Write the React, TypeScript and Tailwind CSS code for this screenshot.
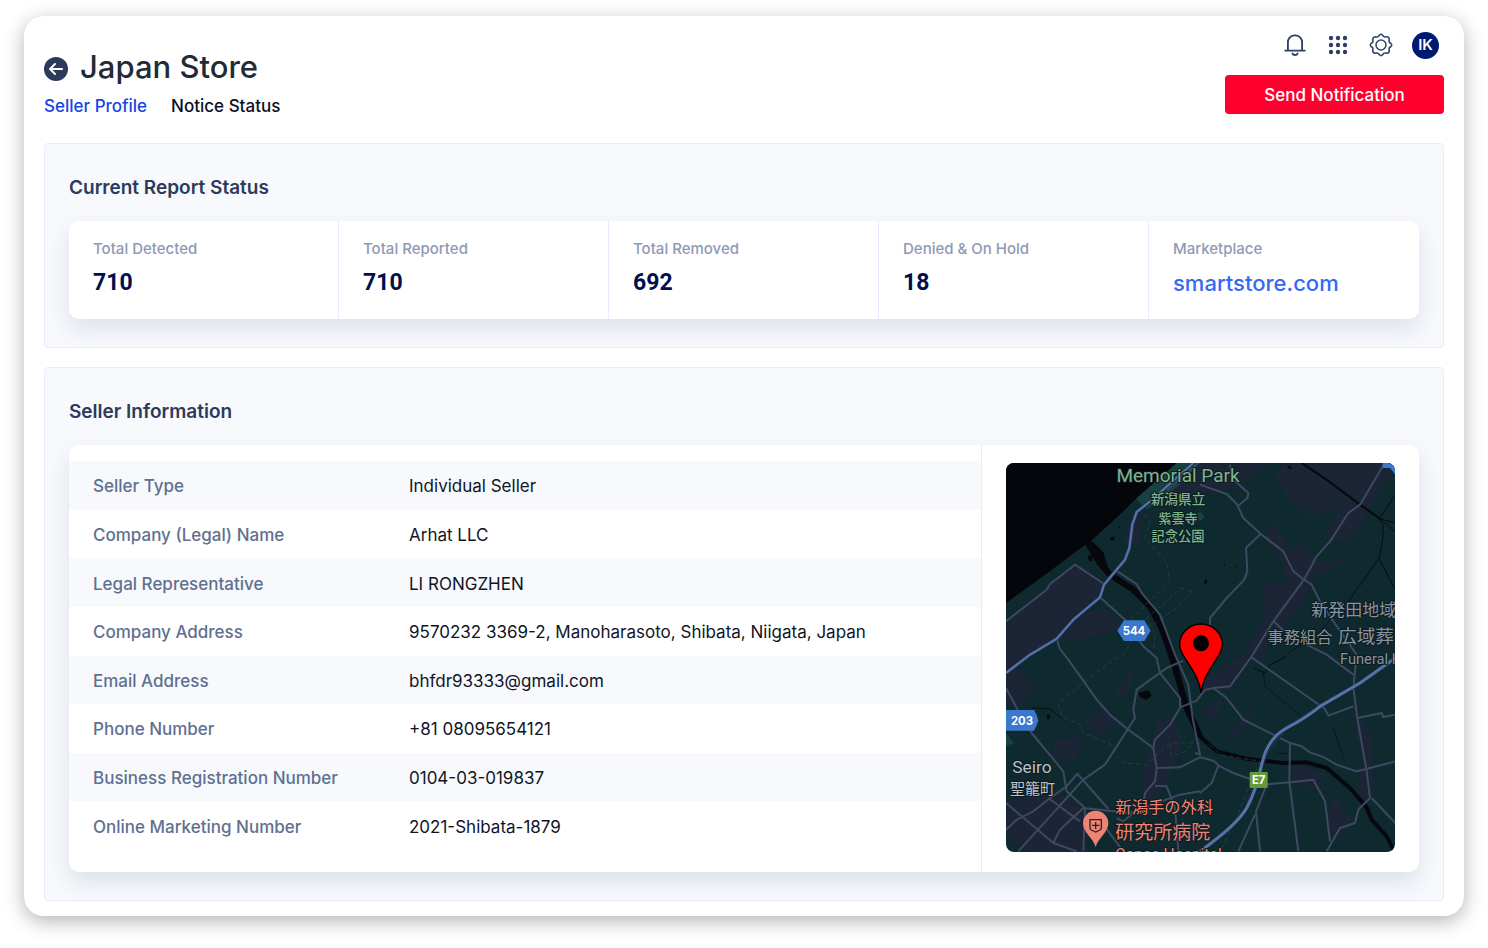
import { Fragment } from "react";

const stats = [
  { label: "Total Detected", value: "710" },
  { label: "Total Reported", value: "710" },
  { label: "Total Removed", value: "692" },
  { label: "Denied & On Hold", value: "18" },
];

const sellerRows = [
  ["Seller Type", "Individual Seller"],
  ["Company (Legal) Name", "Arhat LLC"],
  ["Legal Representative", "LI RONGZHEN"],
  ["Company Address", "9570232 3369-2, Manoharasoto, Shibata, Niigata, Japan"],
  ["Email Address", "bhfdr93333@gmail.com"],
  ["Phone Number", "+81 08095654121"],
  ["Business Registration Number", "0104-03-019837"],
  ["Online Marketing Number", "2021-Shibata-1879"],
];

const urbanAreas = [
  "M18 500L140 405L225 330L312 388L300 430L240 478L320 470L360 520L250 545L175 555L90 600L18 640Z",
  "M395 205L425 180L415 260L375 265Z",
  "M500 60L600 25L800 25L690 100L600 110L560 150L510 90Z",
  "M860 25L1186 25L1120 130L1080 200L1050 245L1010 255L985 230L1030 150L930 180L870 130L830 70Z",
  "M820 210L845 245L870 300L850 320L800 250Z",
  "M905 270L960 330L1030 320L935 370L900 450L800 560L790 610L740 600L800 480L790 390L870 400L850 300Z",
  "M18 625L60 650L105 700L60 745L18 730Z",
  "M265 790L320 765L345 800L300 835L265 810Z",
  "M170 865L245 850L220 920L160 905Z",
  "M350 720L400 645L380 710Z",
  "M430 960L480 800L520 790L540 860L490 990L440 1050Z",
  "M600 690L740 600L690 700L620 705Z",
  "M610 770L660 740L640 790Z",
  "M685 845L755 770L720 830Z",
  "M18 1050L150 1010L250 1060L260 1190L100 1190L20 1150Z",
  "M880 930L970 960L950 1000L890 980Z",
  "M985 1120L1000 1030L1050 1100L1020 1140Z",
  "M1060 780L1110 840L1115 1000L1075 1060L1090 900Z",
];

const minorRoads = [
  "M18 500L140 405L150 388L225 330L312 388",
  "M345 345L385 372L410 388L425 415L480 480L525 600L565 690L578 790L600 900L585 895",
  "M300 428L375 495L430 575L470 610L480 655L540 730L540 760",
  "M170 550L178 580L205 615L290 735L330 780L385 825L460 880L470 940L465 980L435 1015L430 1050L370 1100L350 1090",
  "M18 700L50 760L95 835L190 950L200 1010L255 1060L250 1190",
  "M540 760L510 810L465 855L460 880",
  "M615 705L590 738L540 758",
  "M550 618L500 640L410 705L400 765L405 790L315 930L250 975L55 1190",
  "M18 1125L50 1095L100 1070L150 1030L200 995L232 957L325 1063",
  "M145 1030L240 1100",
  "M18 1045L160 1165L230 1190",
  "M160 1165L180 1125L250 1060L390 1075L540 1020L600 1010",
  "M470 940L540 938L600 908L640 918L660 935L700 955L750 973",
  "M465 993L500 995L525 1060L535 1190",
  "M656 930L635 985L600 1015",
  "M600 90L680 118L710 148L730 190L785 240L850 290L880 350L912 375L935 390L960 440L1000 500L1070 600",
  "M690 30L695 70L745 115L742 130L715 153",
  "M782 237L738 280L742 350L733 375L680 430L630 490L630 530",
  "M1150 32L1080 150L1045 175L990 260L950 305L912 375L820 500L755 605L690 695L640 700L615 705",
  "M820 500L870 545L980 600L1060 660",
  "M755 608L975 763L985 783L1060 755",
  "M640 700L680 730L730 795L870 865L905 875L930 893L970 907L1010 930L1070 950L1110 940L1186 920",
  "M1070 600L1060 700L1072 790L1100 950L1110 1030L1075 1065L1065 1105L1020 1120L980 1190",
  "M1072 790L1145 775L1150 787L1186 780",
  "M1115 1030L1186 1105",
  "M870 865L868 980L895 1190",
  "M790 990L870 983L940 975L975 1040L990 1160",
  "M800 990L768 1070L780 1190",
  "M765 1080L715 1190",
  "M310 1110L370 1190",
  "M600 20L560 55L500 105",
];

const railPaths = [
  "M905 25L980 75L1080 150L1140 192L1186 232",
  "M1135 190L1150 210L1148 255L1137 312L1186 405",
  "M1137 312L1045 440",
  "M1140 190L1186 120M1140 192L1186 205",
  "M760 640L795 655L810 630L860 605",
  "M95 760L150 762L185 790",
];

const faintPaths = ["M1045 440L960 530L860 600", "M790 650L795 695L910 790", "M1000 820L1035 920", "M830 896L865 896"];

const trackPaths = [
  "M430 180L450 200L435 250L500 320L510 380L385 500",
  "M575 410L545 400L440 490L465 540L460 590",
  "M575 410L530 460L400 550L370 600L340 615L175 745L185 785L240 810L250 835L300 855L335 870L350 905L370 925L440 930L510 865L600 865",
  "M510 870L515 905L560 890L580 860",
  "M630 870L660 900L780 920L700 1110L660 1190",
];

const ponds = [
  "M415 715L445 707L455 722L440 736L420 728Z",
  "M330 250L344 245L342 256L334 258Z",
  "M262 305L275 300L278 320L268 318Z",
  "M352 222L362 212L360 220Z",
  "M612 380L622 374L620 386L614 388Z",
  "M671 328L675 328L674 337ZM704 334L710 336L708 341Z",
  "M860 33L872 35L876 42L866 41Z",
  "M140 780L150 780L149 794L141 792Z",
  "M574 308L580 310L581 314Z",
];

function Paths({ items }: { items: string[] }) {
  return (
    <>
      {items.map((d) => (
        <path key={d} d={d} />
      ))}
    </>
  );
}

function SellerMap() {
  return (
    <svg
      viewBox="18 25 1167 1167"
      preserveAspectRatio="xMidYMid slice"
      role="img"
      aria-label="Map of the seller's location"
      className="block aspect-square w-full rounded-lg bg-[#0f2a2f] font-[Roboto,'Noto_Sans_CJK_JP',sans-serif]"
    >
      <g fill="#1b2536" stroke="#1b2536" strokeWidth="10" strokeLinejoin="round">
        <Paths items={urbanAreas} />
      </g>
      <path d="M530 25L600 25L540 90L440 165L405 130L470 75Z" fill="#17423f" />
      <path d="M18 835L42 865L18 875Z" fill="#17423f" />
      <path d="M590 180L600 170L615 188L600 200Z" fill="#17423f" />
      <path d="M18 25L530 25L410 130L372 168L270 262L235 285L150 350L18 445Z" fill="#05060c" />
      <g fill="none" stroke="#06080d" strokeLinejoin="round">
        <path d="M262 262L300 325L330 360L400 405L450 455L485 520L520 620L560 760L600 845" strokeWidth="19" />
        <path d="M268 268L300 300L312 340" strokeWidth="24" />
        <path d="M520 600L555 740L600 845L650 890L740 912L850 925L920 923L980 940L1050 1000L1100 1058L1115 1095L1160 1145L1180 1185" strokeWidth="12" />
      </g>
      <g fill="#06080d">
        <Paths items={ponds} />
      </g>
      <g fill="none" stroke="#36434a" strokeWidth="2" strokeDasharray="14 9">
        <Paths items={trackPaths} />
      </g>
      <g fill="none" stroke="#0a181d" strokeWidth="3">
        <Paths items={faintPaths} />
      </g>
      <g fill="none" stroke="#070b10" strokeWidth="3">
        <Paths items={railPaths} />
        <path d="M905 25L980 75L1080 150L1140 192" strokeWidth="7" />
      </g>
      <g fill="none" stroke="#3d4961" strokeWidth="6" strokeLinejoin="round">
        <Paths items={minorRoads} />
      </g>
      <g fill="none" stroke="#1d2c48" strokeWidth="12" strokeLinejoin="round">
        <path d="M580 25L450 140L410 172L397 210L388 280L375 315L312 390L300 428L220 495L170 552L90 600L18 655" />
        <path d="M600 1190L690 1120L740 1060L765 990L785 930L810 875L860 820L960 755L1080 685L1186 610" />
      </g>
      <g fill="none" stroke="#5474a6" strokeWidth="7" strokeLinejoin="round">
        <path d="M580 25L450 140L410 172L397 210L388 280L375 315L312 390L300 428L220 495L170 552L90 600L18 655" />
        <path d="M600 1190Q712 1110 740 1060T785 930T860 820T960 755L1080 685L1186 610" strokeWidth="9" />
      </g>
      <path d="M1148 25H1186V60L1170 40H1148Z" fill="#3b78cf" />

      <g stroke="#0c1b20" strokeWidth="6" paintOrder="stroke" strokeLinejoin="round">
        <g fill="#7fb48e" textAnchor="middle">
          <text x="534" y="83" fontSize="57">Memorial Park</text>
          <g fontSize="41" fontWeight="500">
            <text x="534" y="149">新潟県立</text>
            <text x="534" y="204" fontSize="39">紫雲寺</text>
            <text x="534" y="259" fontSize="40">記念公園</text>
          </g>
        </g>
        <g fill="#8793a1">
          <text x="934" y="483" fontSize="51">新発田地域</text>
          <text x="802" y="565" fontSize="49">事務組合</text>
          <text x="1014" y="566" fontSize="56">広域葬</text>
          <text x="1020" y="628" fontSize="44">Funeral Hall</text>
        </g>
        <g fill="#bcc1c7">
          <text x="37" y="955" fontSize="52">Seiro</text>
          <text x="30" y="1018" fontSize="45">聖籠町</text>
        </g>
        <g fill="#ee8275">
          <text x="346" y="1074" fontSize="49">新潟手の外科</text>
          <text x="346" y="1154" fontSize="57">研究所病院</text>
          <text x="346" y="1216" fontSize="47">Canaa Hospital</text>
        </g>
      </g>

      <path d="M372 497H433L452 528L433 559H372L352 528Z" fill="#3b78cf" />
      <path d="M18 766H102Q112 782 115 797Q112 812 102 828H18Z" fill="#3b78cf" />
      <rect x="749" y="952" width="54" height="48" rx="3" fill="#639b3c" />
      <g fill="#fff" fontWeight="700" fontSize="34" textAnchor="middle" className="font-[Inter,sans-serif]">
        <text x="402" y="541">544</text>
        <text x="66" y="810">203</text>
        <text x="776" y="988">E7</text>
      </g>

      <path d="M287 1177C280 1150 249 1134 249 1106A38 38 0 0 1 325 1106C325 1134 294 1150 287 1177Z" fill="#ee8275" />
      <path d="M270 1095H304V1120Q304 1124 300 1126L287 1132L274 1126Q270 1124 270 1120Z" fill="none" stroke="#2a2226" strokeWidth="4" />
      <path d="M287 1102V1123M276 1112H298" stroke="#2a2226" strokeWidth="4" />

      <path
        d="M603 714C597 672 580 650 558 615C545 596 539 585 539 570A64 62 0 0 1 667 570C667 585 661 596 648 615C626 650 609 672 603 714Z"
        fill="#fe0000"
        stroke="#000"
        strokeWidth="4"
      />
      <circle cx="603" cy="566" r="24" fill="#000" />
    </svg>
  );
}

function BellIcon() {
  return (
    <svg viewBox="0 0 24 24" className="size-6" fill="none" stroke="#2f3e63" strokeWidth="1.8" strokeLinejoin="round" strokeLinecap="round">
      <path d="M2.2 17.6H21.8M4.9 17.6V9.6A6.8 6.8 0 0 1 11.4 2.4H12.6A6.8 6.8 0 0 1 19.1 9.6V17.6" />
      <path d="M9.4 20.4A2.7 2.2 0 0 0 14.6 20.4" />
    </svg>
  );
}

function GridIcon() {
  return (
    <svg viewBox="0 0 24 24" className="size-6" fill="#2f3e63">
      {[5, 12, 19].map((y) => (
        <Fragment key={y}>
          <circle cx="5" cy={y} r="2.2" />
          <circle cx="12" cy={y} r="2.2" />
          <circle cx="19" cy={y} r="2.2" />
        </Fragment>
      ))}
    </svg>
  );
}

function GearIcon() {
  return (
    <svg viewBox="0 0 24 24" className="size-6" fill="none" stroke="#3a4868" strokeWidth="1.6" strokeLinejoin="round">
      <circle cx="12" cy="12" r="5" />
      <path d="M10.2 2.4Q12 .2 13.8 2.4Q14.8 4.6 17.2 3.7Q20.3 3.4 20.3 6.8Q19.4 9.2 21.6 10.2Q23.8 12 21.6 13.8Q19.4 14.8 20.3 17.2Q20.3 20.3 17.2 20.3Q14.8 19.4 13.8 21.6Q12 23.8 10.2 21.6Q9.2 19.4 6.8 20.3Q3.7 20.3 3.7 17.2Q4.6 14.8 2.4 13.8Q.2 12 2.4 10.2Q4.6 9.2 3.7 6.8Q3.7 3.7 6.8 3.7Q9.2 4.6 10.2 2.4Z" />
    </svg>
  );
}

const panel = "rounded border border-[#e6ecfb] bg-[#f7f9fd] px-6 pb-7";
const card = "rounded-[10px] bg-white shadow-[0_10px_22px_rgba(30,50,90,0.12)]";
const heading = "pt-8 pb-[21px] text-[19px] leading-6 font-semibold text-[#2c3a5c]";

export default function App() {
  return (
    <div className="min-h-screen bg-white px-6 pt-4 pb-8 font-[Inter,sans-serif]">
      <main className="rounded-[20px] bg-white px-5 pt-[15px] pb-[15px] shadow-[0_5px_20px_rgba(0,0,0,0.3)]">
        <header className="flex items-start justify-between">
          <div className="pt-4">
            <div className="flex items-center gap-3">
              <button aria-label="Back" className="mt-1 block">
                <svg viewBox="0 0 24 24" className="size-6">
                  <circle cx="12" cy="12" r="12" fill="#2c3a5c" />
                  <path d="M18 12H6.5M11 7L6 12L11 17" fill="none" stroke="#fff" strokeWidth="2" strokeLinecap="round" strokeLinejoin="round" />
                </svg>
              </button>
              <h1 className="text-[31px] leading-10 font-medium text-[#1f2b37]">Japan Store</h1>
            </div>
            <nav className="mt-[7px] flex gap-6 text-[17px] leading-6 font-medium">
              <a href="#profile" className="text-[#1745ea]">Seller Profile</a>
              <a href="#notices" className="text-[#0b0f24]">Notice Status</a>
            </nav>
          </div>
          <div className="flex flex-col items-end">
            <div className="flex h-7 items-center gap-[19px] pr-[5px]">
              <button aria-label="Notifications"><BellIcon /></button>
              <button aria-label="Apps"><GridIcon /></button>
              <button aria-label="Settings"><GearIcon /></button>
              <button aria-label="Account" className="size-[27px] rounded-full bg-[#001a70] text-[15px] font-semibold text-white">IK</button>
            </div>
            <button className="mt-4 h-[39px] w-[219px] rounded bg-[#ff002e] pt-0.5 text-[17px] font-medium text-white">
              Send Notification
            </button>
          </div>
        </header>

        <section className={`mt-[25px] ${panel}`}>
          <h2 className={heading}>Current Report Status</h2>
          <dl className={`grid grid-cols-5 divide-x divide-[#e6ecfb] ${card}`}>
            {stats.map((s) => (
              <div key={s.label} className="px-6 pt-[18px] pb-5">
                <dt className="text-[15px] leading-5 font-medium text-[#8d9ab5]">{s.label}</dt>
                <dd className="mt-2 font-[Roboto,sans-serif] text-[23px] leading-8 font-bold text-[#000f4f]">{s.value}</dd>
              </div>
            ))}
            <div className="px-6 pt-[18px] pb-5">
              <dt className="text-[15px] leading-5 font-medium text-[#8d9ab5]">Marketplace</dt>
              <dd className="mt-2 text-[22px] leading-8 font-medium">
                <a href="#marketplace" className="text-[#3468f5]">smartstore.com</a>
              </dd>
            </div>
          </dl>
        </section>

        <section className={`mt-[19px] ${panel}`}>
          <h2 className={heading}>Seller Information</h2>
          <div className={`flex ${card}`}>
            <div className="flex-1 pt-4">
              <table className="h-[389px] w-full text-left text-[17px] leading-6">
                <tbody>
                  {sellerRows.map(([label, value]) => (
                    <tr key={label} className="odd:bg-[#f7f9fd]">
                      <th scope="row" className="w-[316px] pt-0.5 pl-6 font-medium text-[#60708f]">{label}</th>
                      <td className="pt-0.5 pl-6 text-[#0f1527]">{value}</td>
                    </tr>
                  ))}
                </tbody>
              </table>
            </div>
            <div className="w-[438px] border-l border-[#e6ecfb] px-6 pt-[18px] pb-5">
              <SellerMap />
            </div>
          </div>
        </section>
      </main>
    </div>
  );
}
